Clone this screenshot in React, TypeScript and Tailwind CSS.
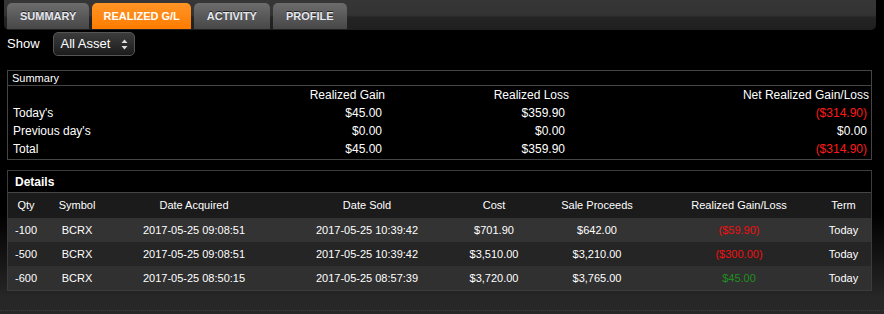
const font = { fontFamily: '"Liberation Sans", Arial, Helvetica, sans-serif' };

const tabs = ["SUMMARY", "REALIZED G/L", "ACTIVITY", "PROFILE"];

const summaryRows = [
  { label: "Today's", gain: "$45.00", loss: "$359.90", net: "($314.90)", neg: true },
  { label: "Previous day's", gain: "$0.00", loss: "$0.00", net: "$0.00", neg: false },
  { label: "Total", gain: "$45.00", loss: "$359.90", net: "($314.90)", neg: true },
];

const details = [
  { qty: "-100", sym: "BCRX", acq: "2017-05-25 09:08:51", sold: "2017-05-25 10:39:42", cost: "$701.90", proceeds: "$642.00", gl: "($59.90)", up: false, bg: "bg-[#333333]" },
  { qty: "-500", sym: "BCRX", acq: "2017-05-25 09:08:51", sold: "2017-05-25 10:39:42", cost: "$3,510.00", proceeds: "$3,210.00", gl: "($300.00)", up: false, bg: "bg-[#252525]" },
  { qty: "-600", sym: "BCRX", acq: "2017-05-25 08:50:15", sold: "2017-05-25 08:57:39", cost: "$3,720.00", proceeds: "$3,765.00", gl: "$45.00", up: true, bg: "bg-[#303030]" },
];

const cols = "grid grid-cols-[36px_66px_168px_178px_76px_130px_154px_1fr] items-center text-center";

function Tab({ label, active }: { label: string; active?: boolean }) {
  return (
    <div
      className={
        active
          ? "h-[26px] px-[11px] flex items-center rounded-t-[5px] bg-[linear-gradient(to_bottom,#ff9426,#ff7c00)] text-white text-[11px] font-bold"
          : "h-[26px] px-[13px] flex items-center rounded-t-[5px] bg-[linear-gradient(to_bottom,#6c6c6c,#474747)] text-[#e6e8f0] text-[11px] font-bold [text-shadow:0_-1px_0_#222]"
      }
    >
      {label}
    </div>
  );
}

export default function App() {
  return (
    <div
      style={font}
      className="w-[884px] h-[314px] overflow-hidden flex flex-col text-white bg-[linear-gradient(to_bottom,#000_0%,#000_68%,#272727_95%)]"
    >
      {/* Tab bar */}
      <div className="ml-[4px] mr-[8px] h-[30px] pl-[3px] pt-[3px] flex gap-[3px] rounded-b-[5px] bg-[linear-gradient(to_bottom,#363636_0%,#333_50%,#242424_58%,#1f1f1f_100%)]">
        {tabs.map((t) => (
          <Tab key={t} label={t} active={t === "REALIZED G/L"} />
        ))}
      </div>

      {/* Filter */}
      <div className="flex items-center pl-[7px] mt-[2px] h-[24px]">
        <span className="text-[13px] mr-[13px]">Show</span>
        <div className="relative w-[82px] h-[24px] rounded-[5px] border border-[#555] bg-[linear-gradient(to_bottom,#3c3c3c,#1c1c1c)] flex items-center pl-[7px] text-[13px]">
          All Asset
          <svg className="absolute right-[6px] top-[6px]" width="7" height="11" viewBox="0 0 7 11">
            <path d="M3.5 0.5 L6.5 4 L0.5 4 Z" fill="#ddd" />
            <path d="M3.5 10.5 L6.5 7 L0.5 7 Z" fill="#ddd" />
          </svg>
        </div>
      </div>

      {/* Summary */}
      <div className="mt-[14px] ml-[7px] mr-[12px] border border-[#454545]">
        <div className="h-[15px] border-b border-[#454545] pl-[4px] text-[11px] leading-[15px]">Summary</div>
        <div className="grid grid-cols-[190px_182px_184px_1fr] pl-[5px] pr-[2px] text-[12px] leading-[18px] pb-[1px]">
          <div />
          <div className="text-right">Realized Gain</div>
          <div className="text-right">Realized Loss</div>
          <div className="text-right">Net Realized Gain/Loss</div>
          {summaryRows.map((r) => (
            <div key={r.label} className="contents">
              <div>{r.label}</div>
              <div className="text-right pr-[3px]">{r.gain}</div>
              <div className="text-right pr-[4px]">{r.loss}</div>
              <div className={"text-right pr-[2px] " + (r.neg ? "text-[#ff1a1a]" : "")}>{r.net}</div>
            </div>
          ))}
        </div>
      </div>

      {/* Details */}
      <div className="mt-[10px] ml-[7px] mr-[12px] border border-[#3c3c3c]">
        <div className="h-[22px] bg-black border-b border-[#454545] pl-[7px] text-[12px] font-bold flex items-center">Details</div>
        <div className={cols + " h-[25px] bg-[#1b1b1b] text-[11px]"}>
          <div>Qty</div>
          <div>Symbol</div>
          <div>Date Acquired</div>
          <div>Date Sold</div>
          <div>Cost</div>
          <div>Sale Proceeds</div>
          <div>Realized Gain/Loss</div>
          <div>Term</div>
        </div>
        {details.map((d, i) => (
          <div key={i} className={cols + " h-[24px] text-[11px] " + d.bg}>
            <div>{d.qty}</div>
            <div>{d.sym}</div>
            <div>{d.acq}</div>
            <div>{d.sold}</div>
            <div>{d.cost}</div>
            <div>{d.proceeds}</div>
            <div className={d.up ? "text-[#1f8f1f]" : "text-[#f01010]"}>{d.gl}</div>
            <div>Today</div>
          </div>
        ))}
      </div>

      <div className="flex-1" />
      <div className="h-[4px] border-t border-dotted border-[#3a3a3a]" />
    </div>
  );
}
